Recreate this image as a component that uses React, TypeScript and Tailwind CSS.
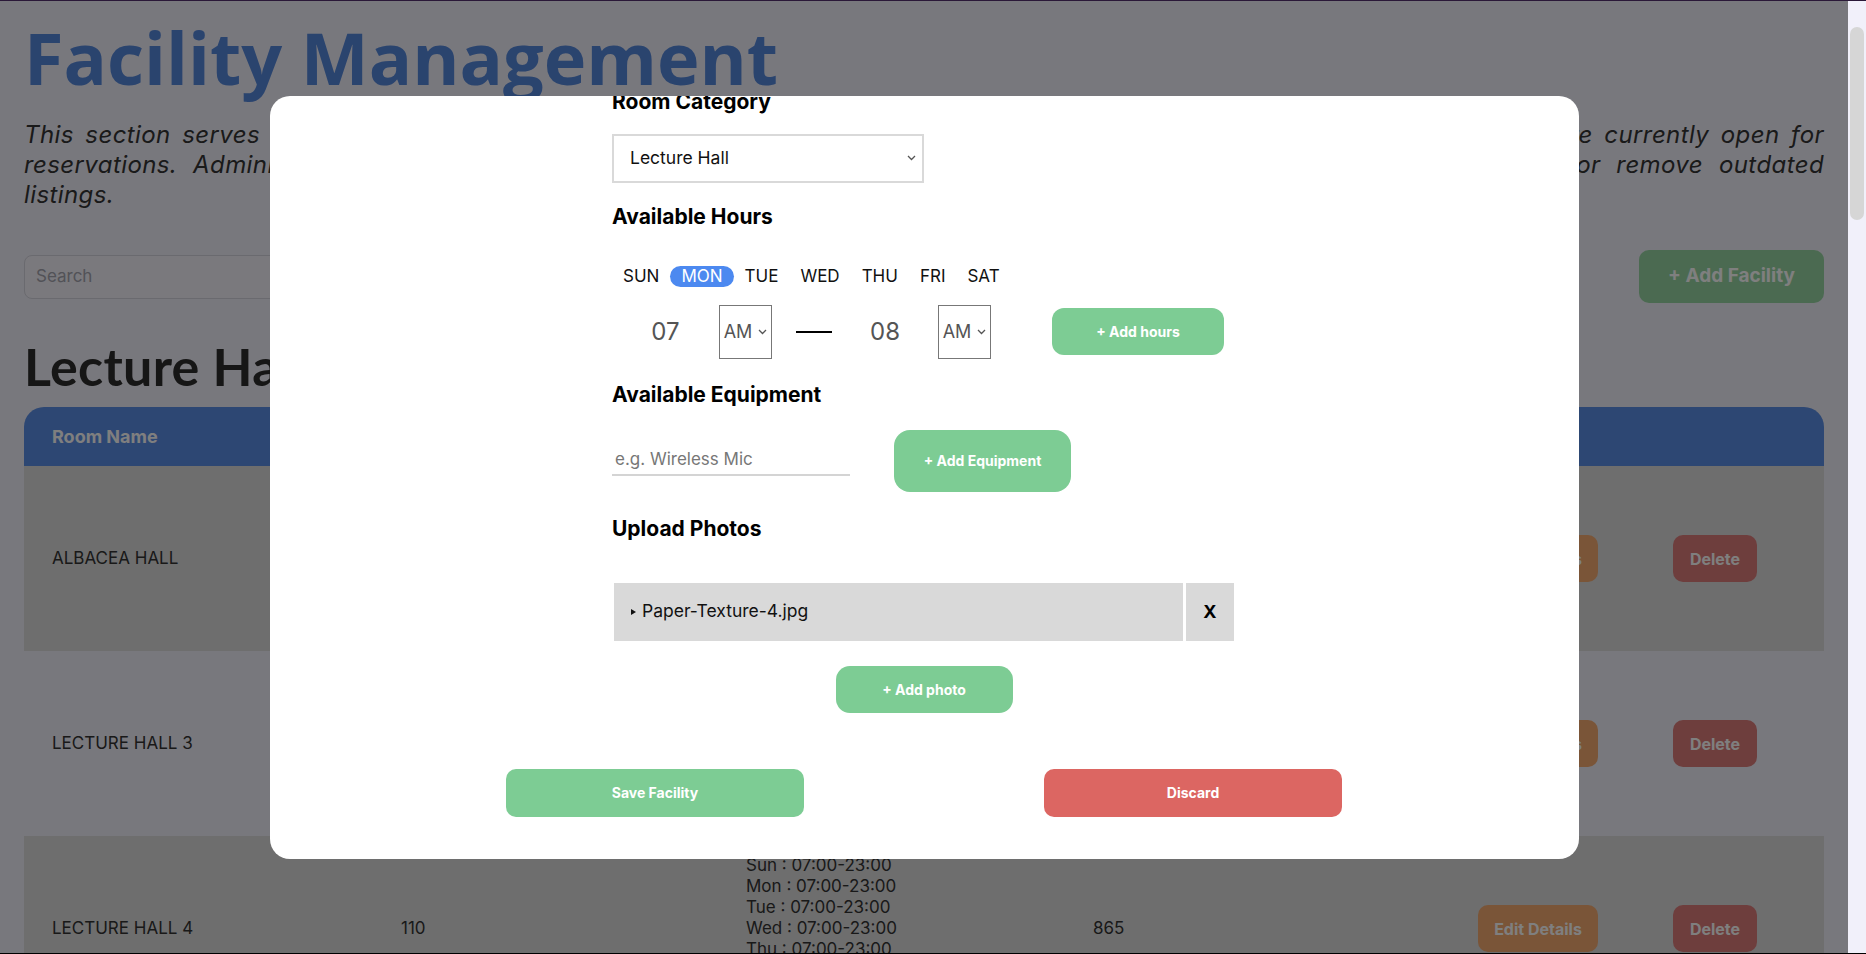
const days = ["SUN", "MON", "TUE", "WED", "THU", "FRI", "SAT"];
const schedule = ["Sun", "Mon", "Tue", "Wed", "Thu", "Fri", "Sat"].map(
  (d) => `${d} : 07:00-23:00`
);

const rooms = [
  { name: "ALBACEA HALL", capacity: "120", number: "812", shaded: true },
  { name: "LECTURE HALL 3", capacity: "100", number: "864", shaded: false },
  { name: "LECTURE HALL 4", capacity: "110", number: "865", shaded: true },
];

const Chevron = ({ color = "#555" }: { color?: string }) => (
  <svg width="9" height="6" viewBox="0 0 9 6">
    <path d="M1 1l3.5 3.5L8 1" stroke={color} strokeWidth="1.3" fill="none" />
  </svg>
);

const AmBox = () => (
  <div className="w-[53px] h-[54px] border border-[#777] flex items-center justify-center gap-[6px] text-[18px] text-[#555]">
    AM
    <Chevron />
  </div>
);

const FacilityTable = () => (
  <div className="mt-[11px]">
    <div className="grid grid-cols-[349px_345px_347px_385px_195px_1fr] h-[59px] items-center rounded-t-[20px] bg-[#5a8ee6] text-white font-bold text-[18px]">
      <div className="pl-[28px]">Room Name</div>
      <div className="pl-[28px]">Capacity</div>
      <div className="pl-[28px]">Available Hours</div>
      <div className="pl-[28px]">Room No.</div>
      <div />
      <div />
    </div>
    {rooms.map((r) => (
      <div
        key={r.name}
        className={`grid grid-cols-[349px_345px_347px_385px_195px_1fr] items-center py-[19px] text-[17px] text-[#333] ${
          r.shaded ? "bg-[#dcdcdc]" : "bg-[#f1f0fa]"
        }`}
      >
        <div className="pl-[28px]">{r.name}</div>
        <div className="pl-[28px]">{r.capacity}</div>
        <div className="pl-[28px] flex flex-col leading-[21px]">
          {schedule.map((s) => (
            <span key={s}>{s}</span>
          ))}
        </div>
        <div className="pl-[28px]">{r.number}</div>
        <div className="pl-[28px]">
          <button className="w-[120px] h-[47px] rounded-[10px] bg-[#f4aa70] text-white font-bold text-[16px]">
            Edit Details
          </button>
        </div>
        <div className="pl-[28px]">
          <button className="w-[84px] h-[47px] rounded-[10px] bg-[#dc7c7a] text-white font-bold text-[16px]">
            Delete
          </button>
        </div>
      </div>
    ))}
  </div>
);

const Page = () => (
  <main className="px-6 pt-[20px] font-['Inter',sans-serif]">
    <h1 className="font-['Open_Sans',sans-serif] font-bold text-[72px] leading-none text-[#5588dd]">
      Facility Management
    </h1>
    <p className="mt-[27px] text-[24px] leading-[30px] italic tracking-[0.4px] text-[#343434]">
      <span className="block text-justify [text-align-last:justify]">
        This section serves as the central hub for managing all university
        facilities, including lecture halls and meeting rooms, that are
        currently open for
      </span>
      <span className="block text-justify [text-align-last:justify]">
        reservations. Administrators can add new facilities, update room
        details, available hours and equipment, upload photos, or remove
        outdated
      </span>
      <span className="block">listings.</span>
    </p>
    <div className="mt-[40px] flex items-center justify-between">
      <div className="w-[600px] h-[44px] rounded-[8px] border border-[#d4d4de] bg-[#f4f3fb] flex items-center px-[11px] text-[17px] text-[#a4a4ae]">
        Search
      </div>
      <button className="w-[185px] h-[53px] rounded-[10px] bg-[#96d4a2] text-white font-bold text-[19px]">
        + Add Facility
      </button>
    </div>
    <h2 className="mt-[33px] font-['Lato',sans-serif] font-bold text-[52px] leading-[60px] tracking-[0.3px] text-[#2c2c2c]">
      Lecture Halls
    </h2>
    <FacilityTable />
  </main>
);

const Modal = () => (
  <div className="w-[1309px] h-[763px] rounded-[20px] bg-white overflow-hidden flex flex-col items-center font-['Inter',sans-serif] text-black">
    <div className="w-[624px] flex flex-col">
      <h3 className="mt-[-6px] text-[21px] leading-6 font-bold">Room Category</h3>
      <div className="mt-[20px] w-[312px] h-[49px] border-2 border-[#d9d9d9] flex items-center justify-between pl-[16px] pr-[6px] text-[17.5px] text-[#111]">
        Lecture Hall
        <Chevron />
      </div>

      <h3 className="mt-[22px] text-[21px] leading-6 font-bold">Available Hours</h3>
      <div className="mt-[37px] flex text-[17px] leading-[21px] text-[#111]">
        {days.map((d) => (
          <span
            key={d}
            className={`px-[11px] rounded-full ${
              d === "MON" ? "bg-[#4c89f0] text-white" : ""
            }`}
          >
            {d}
          </span>
        ))}
      </div>
      <div className="mt-[18px] flex items-center">
        <div className="w-[107px] text-center text-[24px] text-[#555]">07</div>
        <AmBox />
        <div className="ml-[24px] w-[36px] h-[2px] bg-black" />
        <div className="w-[106px] text-center text-[24px] text-[#555]">08</div>
        <AmBox />
        <button className="ml-[61px] w-[172px] h-[47px] rounded-[12px] bg-[#7dcc94] text-white font-bold text-[14px]">
          + Add hours
        </button>
      </div>

      <h3 className="mt-[24px] text-[21px] leading-6 font-bold">Available Equipment</h3>
      <div className="mt-[23px] flex items-center">
        <div className="w-[238px] h-[30px] border-b-2 border-[#d4d4d4] flex items-center pl-[3px] text-[17px] text-[#777]">
          e.g. Wireless Mic
        </div>
        <button className="ml-[44px] w-[177px] h-[62px] rounded-[16px] bg-[#7dcc94] text-white font-bold text-[14px]">
          + Add Equipment
        </button>
      </div>

      <h3 className="mt-[25px] text-[21px] leading-6 font-bold">Upload Photos</h3>
      <div className="mt-[42px] ml-[2px] flex h-[58px]">
        <div className="w-[569px] bg-[#d9d9d9] flex items-center pl-[17px] text-[17.5px] text-[#111]">
          <svg width="5" height="6" viewBox="0 0 5 6" className="mr-[6px]">
            <path d="M0 0L5 3L0 6Z" fill="#111" />
          </svg>
          Paper-Texture-4.jpg
        </div>
        <div className="ml-[3px] w-[48px] bg-[#d9d9d9] flex items-center justify-center font-bold text-[18px]">
          X
        </div>
      </div>
      <div className="mt-[25px] flex justify-center">
        <button className="w-[177px] h-[47px] rounded-[14px] bg-[#7dcc94] text-white font-bold text-[14px]">
          + Add photo
        </button>
      </div>
    </div>
    <div className="mt-[56px] flex gap-[240px]">
      <button className="w-[298px] h-[48px] rounded-[10px] bg-[#7dcc94] text-white font-bold text-[14px]">
        Save Facility
      </button>
      <button className="w-[298px] h-[48px] rounded-[10px] bg-[#dc6662] text-white font-bold text-[14px]">
        Discard
      </button>
    </div>
  </div>
);

export default function App() {
  return (
    <div className="h-screen w-full overflow-hidden flex flex-col bg-[#f1f0fa] border-t border-t-[#2a1838] border-b border-b-black">
      <div className="flex flex-1 min-h-0">
        <div className="relative flex-1 overflow-hidden">
          <Page />
          <div className="absolute inset-0 bg-black/50 flex items-center justify-center">
            <Modal />
          </div>
        </div>
        <div className="w-[18px] px-[2px] bg-[#f1f0fa]">
          <div className="mt-[26px] h-[193px] rounded-full bg-[#d6d6d6]" />
        </div>
      </div>
    </div>
  );
}
